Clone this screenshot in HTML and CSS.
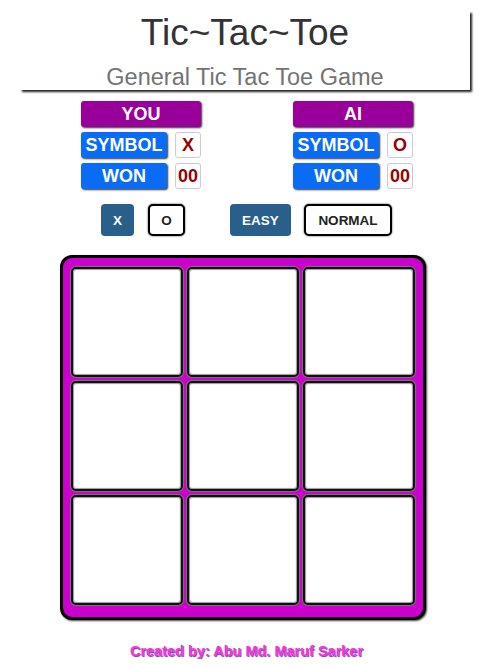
FILE: index.html
```html
<!DOCTYPE html>
<html>
<head>
<meta charset="utf-8">
<title>Tic~Tac~Toe</title>
<link rel="stylesheet" href="styles.css">
</head>
<body>
<header class="card">
  <h1 class="title">Tic~Tac~Toe</h1>
  <p class="subtitle">General Tic Tac Toe Game</p>
</header>

<section class="players">
  <div class="panel">
    <div class="bar">YOU</div>
    <div class="row"><span class="label">SYMBOL</span><span class="val">X</span></div>
    <div class="row"><span class="label">WON</span><span class="val">00</span></div>
  </div>
  <div class="panel">
    <div class="bar">AI</div>
    <div class="row"><span class="label">SYMBOL</span><span class="val">O</span></div>
    <div class="row"><span class="label">WON</span><span class="val">00</span></div>
  </div>
</section>

<section class="controls">
  <div class="group">
    <button class="btn solid btn-x">X</button>
    <button class="btn outline btn-o">O</button>
  </div>
  <div class="group">
    <button class="btn solid btn-easy">EASY</button>
    <button class="btn outline btn-normal">NORMAL</button>
  </div>
</section>

<main class="board">
  <div class="cell"></div><div class="cell"></div><div class="cell"></div>
  <div class="cell"></div><div class="cell"></div><div class="cell"></div>
  <div class="cell"></div><div class="cell"></div><div class="cell"></div>
</main>

<footer class="credit">Created by: Abu Md. Maruf Sarker</footer>
</body>
</html>
```

FILE: styles.css
```css
* { box-sizing: border-box; }

body {
  margin: 0;
  font-family: "Liberation Sans", Arial, sans-serif;
  background: #fff;
}

.card {
  width: 450px;
  height: 79px;
  margin: 11px 0 0 20px;
  background: #fff;
  box-shadow: 2px 2px 2px #222;
  text-align: center;
  padding-top: 1px;
}

.title {
  margin: 0;
  font-size: 37px;
  font-weight: normal;
  color: #333;
  line-height: 42px;
}

.subtitle {
  margin: 10px 0 0;
  font-size: 23.5px;
  color: #737373;
  line-height: 26px;
}

.players {
  display: flex;
  gap: 92px;
  margin: 11px 0 0 81px;
}

.panel {
  display: flex;
  flex-direction: column;
  gap: 5px;
  width: 120px;
}

.bar {
  height: 26px;
  background: #990099;
  color: #fff;
  font-weight: bold;
  font-size: 18px;
  line-height: 26px;
  text-align: center;
  border-radius: 3px;
  box-shadow: 1px 1px 2px #333;
}

.row {
  display: flex;
  gap: 8px;
}

.label {
  width: 86px;
  height: 26px;
  background: #0a6cf5;
  color: #fff;
  font-weight: bold;
  font-size: 18px;
  line-height: 26px;
  text-align: center;
  border-radius: 3px;
  box-shadow: 1px 1px 2px #333;
}

.val {
  width: 26px;
  height: 26px;
  border: 1px solid #ccc;
  border-radius: 3px;
  color: #990000;
  font-weight: bold;
  font-size: 18px;
  line-height: 24px;
  text-align: center;
}

.controls {
  display: flex;
  gap: 45px;
  margin: 15px 0 0 101px;
}

.group {
  display: flex;
  gap: 14px;
}

.btn {
  height: 32px;
  font-family: "Liberation Sans", Arial, sans-serif;
  font-weight: bold;
  font-size: 13.5px;
  border-radius: 4px;
  padding: 0;
  cursor: pointer;
}

.solid {
  background: #2a5e8b;
  color: #fff;
  border: none;
}

.outline {
  background: #fff;
  color: #222;
  border: 2px solid #000;
  border-radius: 5px;
  box-shadow: 0 0 2px #333;
}

.btn-x { width: 33px; }
.btn-o { width: 37px; }
.btn-easy { width: 61px; }
.btn-normal { width: 88px; }

.group + .group { gap: 13px; }

.board {
  display: grid;
  grid-template-columns: repeat(3, 112px);
  grid-template-rows: repeat(3, 110px);
  gap: 4px;
  width: 366px;
  margin: 19px 0 0 60px;
  padding: 9px 8px 12px 8px;
  background: #cc00cc;
  border: 3px solid #000;
  border-radius: 12px;
  box-shadow: 1px 1px 2px #444;
}

.cell {
  background: #fff;
  border: 2px solid #111;
  border-radius: 5px;
  box-shadow: 0 0 1px 1px #777, inset 0 0 1px 1px #999;
}

.credit {
  margin-top: 23px;
  text-align: center;
  font-weight: bold;
  font-size: 14.5px;
  color: #f3c;
  text-shadow: 1px 1px 1px #3344cc;
  padding-right: 2px;
}
```
